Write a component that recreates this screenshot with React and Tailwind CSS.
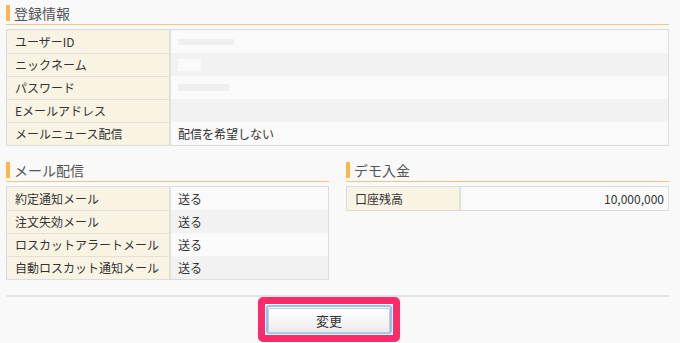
const font = { fontFamily: '"Noto Sans CJK JP", "Noto Sans", sans-serif' };

const accountRows = [
  { label: "ユーザーID", blur: "w-[56px] h-[6px] bg-[#efefef]" },
  { label: "ニックネーム", blur: "w-[23px] h-[12px] bg-[#fafafa]" },
  { label: "パスワード", blur: "w-[51px] h-[7px] bg-[#efefef]" },
  { label: "Eメールアドレス" },
  { label: "メールニュース配信", value: "配信を希望しない" },
];

const mailRows = [
  { label: "約定通知メール", value: "送る" },
  { label: "注文失効メール", value: "送る" },
  { label: "ロスカットアラートメール", value: "送る" },
  { label: "自動ロスカット通知メール", value: "送る" },
];

function Heading({ children }) {
  return (
    <div className="border-b border-[#fcc67a] pb-[3px]">
      <div className="flex items-center h-[16px] border-l-4 border-[#fbb64c] pl-[4px] text-[14px] text-[#555]">
        {children}
      </div>
    </div>
  );
}

function Table({ rows, labelWidth, alignRight }) {
  return (
    <div className="mt-[4px] border border-[#dcdcdc]">
      {rows.map((row, i) => (
        <div key={row.label} className="flex h-[23px] text-[12px] text-[#333]">
          <div
            className={`flex items-center pl-[8px] bg-[#f9f3e3] border-r-2 border-[#e4e0d7] ${
              i > 0 ? "border-t border-t-[#e4e0d7]" : ""
            }`}
            style={{ width: labelWidth }}
          >
            {row.label}
          </div>
          <div
            className={`flex-1 flex items-center ${
              i % 2 === 0 ? "bg-[#fafafa]" : "bg-[#f2f2f2]"
            } ${alignRight ? "justify-end pr-[4px]" : "px-[7px]"}`}
          >
            {row.blur ? <div className={row.blur} /> : row.value}
          </div>
        </div>
      ))}
    </div>
  );
}

export default function App() {
  return (
    <div className="w-[680px] h-[343px] bg-[#f9f9f9] overflow-hidden" style={font}>
      <div className="w-[663px] ml-[6px] pt-[5px]">
        <Heading>登録情報</Heading>
        <Table rows={accountRows} labelWidth={164} />

        <div className="flex gap-[17px] mt-[16px]">
          <div className="w-[323px]">
            <Heading>メール配信</Heading>
            <Table rows={mailRows} labelWidth={164} />
          </div>
          <div className="w-[323px]">
            <Heading>デモ入金</Heading>
            <Table
              rows={[{ label: "口座残高", value: "10,000,000" }]}
              labelWidth={114}
              alignRight
            />
          </div>
        </div>

        <div className="mt-[15px] h-[2px] bg-[#e4e4e4]" />

        <div className="pl-[252px]">
          <div className="w-[142px] h-[45px] border-[7px] border-[#fb2c69] rounded-[5px] p-[1px] bg-[#f9f9f9]">
            <div className="h-full border-2 border-[#8ec3f7] rounded-[3px]">
              <button className="w-full h-full border border-[#c9c9c9] rounded-[2px] bg-gradient-to-b from-white to-[#ececec] text-[13px] text-[#333]">
                変更
              </button>
            </div>
          </div>
        </div>
      </div>
    </div>
  );
}
